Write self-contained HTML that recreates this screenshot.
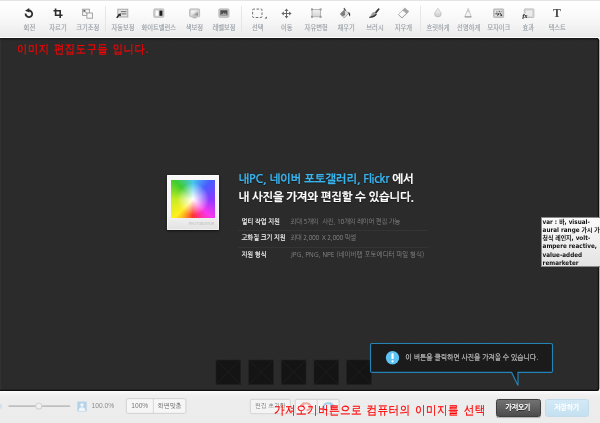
<!DOCTYPE html>
<html lang="ko">
<head>
<meta charset="utf-8">
<title>포토에디터</title>
<style>
html,body{margin:0;padding:0;}
body{width:600px;height:423px;overflow:hidden;position:relative;background:#ececec;font-family:"Liberation Sans","NanumGothic","Noto Sans CJK KR",sans-serif;}
.abs{position:absolute;}
#toolbar{position:absolute;left:0;top:0;width:600px;height:38px;background:linear-gradient(#ffffff 0,#fbfbfb 30%,#f5f5f5 60%,#eeeeee 85%,#e9e9e9 96%,#fdfdfd 97.5%,#fdfdfd 100%);border-top:1px solid #e4e4e4;box-sizing:border-box;}
.lb{position:absolute;width:60px;top:21.7px;text-align:center;font-family:"Noto Sans CJK KR","NanumGothic",sans-serif;font-size:6.3px;line-height:9px;color:#979ea5;-webkit-text-stroke:0.12px #979ea5;white-space:nowrap;transform:scaleY(1.1);}
.ticons{position:absolute;left:0;top:-1px;filter:blur(0.3px);}
.sep{position:absolute;top:5px;width:1px;height:25.5px;background:#e6e6e6;}
#canvas{position:absolute;left:0;top:38px;width:598.6px;height:352.6px;background-color:#2a2a2a;border-radius:0 2.5px 2.5px 0;overflow:hidden;}
#canvas .edge{position:absolute;left:0;top:0;width:100%;height:100%;border-radius:0 2.5px 2.5px 0;box-shadow:inset 0 1.5px 1px 0 rgba(0,0,0,.45), inset -1.2px 0 0.5px 0 rgba(0,0,0,.55), inset 0 -1.2px 0.6px 0 rgba(0,0,0,.65), inset 1px 0 0 0 rgba(255,255,255,.05);}
#canvas .pat{position:absolute;left:0;top:0;width:100%;height:100%;}
.red{position:absolute;color:#ff0000;font-family:"WenQuanYi Zen Hei","NanumGothic","Noto Sans CJK KR",sans-serif;white-space:nowrap;transform-origin:0 0;-webkit-text-stroke:0.2px #ff0000;}
#bottombar{position:absolute;left:0;top:390.6px;width:600px;height:33px;background:linear-gradient(#fcfcfc 0,#f7f7f7 1.5px,#f0f0f0 4px,#ededed 8px,#ececec 100%);}
</style>
</head>
<body>
<div id="root" style="position:absolute;left:0;top:0;width:600px;height:423px;will-change:transform;">
<div id="toolbar">
<svg class="ticons" width="600" height="38" viewBox="0 0 600 38">
<!-- rotate -->
<path d="M25.6 13.5 A3.3 3.3 0 1 0 28.9 10.5" fill="none" stroke="#2e2e2e" stroke-width="1.8"/>
<path d="M25 10.8 L29.2 8 L29.5 12.6 Z" fill="#2e2e2e"/>
<!-- crop -->
<path d="M55.6 8.5 V15.2 H62.6 M53.5 10.7 H60.2 V18" fill="none" stroke="#2e2e2e" stroke-width="1.6"/>
<!-- resize -->
<rect x="82.6" y="9.2" width="6.8" height="6.2" fill="#f4f4f4" stroke="#9a9a9a" stroke-width="0.9"/>
<rect x="86.9" y="13" width="5.5" height="5.2" fill="#fafafa" stroke="#9a9a9a" stroke-width="0.9"/>
<path d="M84 10.6 L87.2 13.6" stroke="#777" stroke-width="0.8"/><path d="M83.4 10 L85.8 10.3 L83.7 12.4 Z" fill="#555"/>
<!-- auto -->
<rect x="117.8" y="9.2" width="10" height="7.8" fill="#dcdcdc" stroke="#a5a5a5" stroke-width="0.9"/>
<rect x="119.4" y="10.6" width="7" height="5" fill="#ececec"/>
<path d="M120.8 11.7 H126.4 M121.5 13.9 H126.4" stroke="#555" stroke-width="0.9"/>
<path d="M116.7 17.9 L119.4 14.6" stroke="#222" stroke-width="1.5"/><path d="M120.6 12.9 L121 16.3 L117.8 14.7 Z" fill="#222"/>
<!-- white balance -->
<rect x="153.8" y="8.9" width="10" height="8.4" rx="1" fill="#cfcfcf" stroke="#b0b0b0" stroke-width="0.8"/>
<rect x="155.6" y="10.6" width="3.2" height="5.2" fill="#fdfdfd"/><rect x="158.8" y="10.6" width="0.9" height="5.2" fill="#999"/><rect x="159.6" y="10.6" width="2.8" height="5.2" fill="#1e1e1e"/>
<!-- color -->
<defs><linearGradient id="gcol" x1="0" y1="0" x2="1" y2="1"><stop offset="0" stop-color="#fff"/><stop offset="0.45" stop-color="#e8e8e8"/><stop offset="1" stop-color="#666"/></linearGradient>
<linearGradient id="gfree" x1="0" y1="0" x2="0" y2="1"><stop offset="0" stop-color="#f2f2f2"/><stop offset="1" stop-color="#d4d4d4"/></linearGradient>
<linearGradient id="gdrop" x1="0" y1="0" x2="0" y2="1"><stop offset="0" stop-color="#fafafa"/><stop offset="1" stop-color="#c9c9c9"/></linearGradient></defs>
<rect x="189.6" y="8.9" width="10" height="7.9" rx="1" fill="#d2d2d2" stroke="#b0b0b0" stroke-width="0.8"/>
<rect x="191.2" y="10.4" width="6.8" height="5" fill="url(#gcol)"/>
<rect x="192.6" y="17" width="4" height="1.3" fill="#b5b5b5"/>
<!-- level -->
<rect x="218.9" y="8.9" width="10" height="8.4" rx="1" fill="#cdcdcd" stroke="#ababab" stroke-width="0.8"/>
<rect x="220.3" y="10.2" width="7.2" height="5.2" fill="#505050"/>
<path d="M220.6 15.2 L221.8 13.6 L222.6 14.4 L223.6 12.6 L224.6 14 L225.4 13 L227.2 15.2 Z" fill="#a8a8a8"/>
<!-- select -->
<rect x="252.6" y="9.1" width="9.4" height="8.4" rx="1" fill="none" stroke="#707070" stroke-width="1" stroke-dasharray="2.6 1.5" stroke-dashoffset="1.2"/>
<path d="M266.8 16.4 V18.6 H264.6 Z" fill="#444"/>
<!-- move -->
<path d="M286.5 10.5 V16.5 M283.5 13.5 H289.5" stroke="#666" stroke-width="1" fill="none"/>
<path d="M286.5 8.4 L288.4 10.9 H284.6 Z M286.5 18.6 L288.4 16.1 H284.6 Z M281.4 13.5 L283.9 11.6 V15.4 Z M291.6 13.5 L289.1 11.6 V15.4 Z" fill="#666"/>
<!-- free transform -->
<rect x="312" y="9.4" width="8.6" height="7.4" fill="url(#gfree)" stroke="#a8a8a8" stroke-width="0.8"/>
<g fill="#999"><rect x="311" y="8.4" width="2" height="2"/><rect x="319.6" y="8.4" width="2" height="2"/><rect x="311" y="15.8" width="2" height="2"/><rect x="319.6" y="15.8" width="2" height="2"/></g>
<!-- bucket -->
<path d="M340.2 14 L344.6 9.4 L348.7 13.4 L344.2 18 Z" fill="#dedede" stroke="#8c8c8c" stroke-width="0.7"/>
<path d="M340.4 14 L344.6 9.7 L345.2 15 L342.6 16.3 Z" fill="#7c7c7c"/>
<path d="M343.9 8.2 L345.6 10.6" stroke="#555" stroke-width="1.3"/>
<path d="M348.4 11.8 C350.4 12.8 350.6 15.2 349.8 16.6 C349 15.4 348.5 14 348.4 11.8Z" fill="#2e2e2e"/>
<!-- brush -->
<path d="M378.6 9.2 L375.8 12.6" stroke="#333" stroke-width="1.8" stroke-linecap="round"/>
<path d="M374.6 12 L376.6 13.8 C376.4 15.2 375.4 16 374.2 16.4 C372.6 17 371 17.3 369.2 17.3 C371 16 371.2 14.2 372.4 12.8 C373 12.2 373.8 11.8 374.6 12Z" fill="#a2a2a2"/>
<path d="M369.2 17.4 C371.4 17.5 373.4 17.2 375 16.2 C375.8 15.6 376.3 14.8 376.5 14 L375.2 14.6 C374.6 15.4 372.6 16.4 369.2 17.4Z" fill="#2e2e2e" stroke="#2e2e2e" stroke-width="0.5"/>
<!-- eraser -->
<path d="M398.4 14.4 L404.8 8.2 L408.6 11.4 L402 17.8 Z" fill="#fbfbfb" stroke="#adadad" stroke-width="0.8" stroke-linejoin="round"/>
<path d="M402.7 10.2 L404.8 8.2 L408.6 11.4 L406.5 13.4 Z" fill="#a6a6a6" stroke="#a0a0a0" stroke-width="0.5" stroke-linejoin="round"/>
<path d="M398.6 14.8 L402 18 L408.6 11.7" fill="none" stroke="#a0a0a0" stroke-width="0.9" stroke-linejoin="round"/>
<!-- blur drop -->
<path d="M437.9 8.4 C439 10.6 441.2 12 441.2 13.9 A3.3 3 0 0 1 434.6 13.9 C434.6 12 436.8 10.6 437.9 8.4Z" fill="url(#gdrop)" stroke="#b6b6b6" stroke-width="0.7"/>
<!-- sharpen -->
<path d="M468.2 8.4 L471.3 16.9 H464.8 Z" fill="#f4f4f4" stroke="#b6b6b6" stroke-width="0.7" stroke-linejoin="round"/>
<path d="M464.8 16.9 H471.3" stroke="#909090" stroke-width="1"/>
<path d="M468.2 8.8 L469.4 12 H467Z" fill="#c9c9c9"/>
<!-- mosaic -->
<rect x="493.5" y="8.9" width="10.2" height="8.6" rx="0.8" fill="#c9c9c9" stroke="#b2b2b2" stroke-width="0.8"/>
<rect x="495" y="10.4" width="7.2" height="5.6" fill="#e6e6e6"/>
<g fill="#3a3a3a"><rect x="496.2" y="11.2" width="1.4" height="1.4" fill="#888"/><rect x="498.6" y="10.8" width="1.4" height="1.4" fill="#777"/><rect x="500.6" y="11" width="1.3" height="1.3" fill="#999"/><rect x="495.4" y="13" width="1.5" height="1.5" fill="#666"/><rect x="497.4" y="13.2" width="1.7" height="1.7"/><rect x="499.6" y="12.8" width="1.5" height="1.5" fill="#555"/><rect x="500.4" y="14.3" width="1.7" height="1.7"/><rect x="497" y="15" width="1.3" height="1" fill="#777"/></g>
<!-- effect -->
<rect x="524.3" y="8.9" width="9.6" height="8.6" rx="0.6" fill="#dcdcdc" stroke="#b4b4b4" stroke-width="0.8"/>
<rect x="525.6" y="10.2" width="7" height="6" fill="#ececec" stroke="#d0d0d0" stroke-width="0.5"/>
<rect x="522.6" y="13.4" width="4.6" height="5" fill="#f2f2f2" opacity="0.75"/>
<text x="522.6" y="18.2" font-family="Liberation Serif,serif" font-style="italic" font-weight="bold" font-size="5.8" fill="#1e1e1e" stroke="#1e1e1e" stroke-width="0.15">fx</text>
<!-- text -->
<text x="557" y="17" text-anchor="middle" font-family="Liberation Serif,serif" font-weight="bold" font-size="11.8" fill="#4a4a4a">T</text>
</svg>
<div class="lb" style="left:-0.6px">회전</div><div class="lb" style="left:28.0px">자르기</div><div class="lb" style="left:57.8px">크기조정</div><div class="lb" style="left:93.0px">자동보정</div><div class="lb" style="left:128.8px">화이트밸런스</div><div class="lb" style="left:164.4px">색보정</div><div class="lb" style="left:194.0px">레벨보정</div><div class="lb" style="left:227.8px">선택</div><div class="lb" style="left:256.7px">이동</div><div class="lb" style="left:286.2px">자유변형</div><div class="lb" style="left:316.1px">채우기</div><div class="lb" style="left:345.0px">브러시</div><div class="lb" style="left:373.4px">지우개</div><div class="lb" style="left:408.0px">흐릿하게</div><div class="lb" style="left:438.7px">선명하게</div><div class="lb" style="left:468.8px">모자이크</div><div class="lb" style="left:498.2px">효과</div><div class="lb" style="left:527.2px">텍스트</div>
<div class="sep" style="left:105.2px"></div><div class="sep" style="left:241px"></div><div class="sep" style="left:419.8px"></div>
</div>

<div class="abs" style="left:597px;top:40px;width:3px;height:349px;background:linear-gradient(to right,#777 0,#8c8c8c 55%,#c4c4c4 100%);"></div>
<div id="canvas">
  <svg class="pat" width="599" height="353"><defs><pattern id="chk" width="2.4" height="2.4" patternUnits="userSpaceOnUse"><rect width="2.4" height="2.4" fill="#272727"/><rect width="1.2" height="1.2" fill="#2f2f2f"/><rect x="1.2" y="1.2" width="1.2" height="1.2" fill="#2f2f2f"/></pattern></defs><rect width="599" height="353" fill="url(#chk)"/></svg>
  <div class="edge"></div>
</div>

<div class="red" style="left:17.2px;top:41.8px;font-size:12px;line-height:15px;letter-spacing:0.8px;word-spacing:0.5px;transform:scaleX(0.853);">이미지 편집도구들 입니다.</div>

<!-- polaroid -->
<div class="abs" style="left:167.2px;top:174.7px;width:51.5px;height:55.3px;background:linear-gradient(#f8f8f8 0,#f4f4f4 70%,#e2e2e2 100%);box-shadow:0 1px 2.5px rgba(0,0,0,.6), inset 0 0 0 0.6px #fff;border-radius:1px;"></div>
<div class="abs" style="left:171.2px;top:179.5px;width:43.9px;height:38px;background:radial-gradient(circle at 50% 50%,#fff 0,rgba(255,255,255,.85) 9%,rgba(255,255,255,0) 55%),conic-gradient(from 0deg,#45c8f0 0deg,#4a5cff 45deg,#8a3bff 90deg,#f838ee 135deg,#ff309a 158deg,#ff3030 180deg,#ff9a20 203deg,#fff020 225deg,#c4ec22 270deg,#40cc30 315deg,#45c8f0 360deg);"></div>
<div class="abs" style="left:187.2px;top:221.7px;width:27px;font-size:3.3px;line-height:5px;color:#c6c6c6;letter-spacing:0.12px;text-align:right;font-weight:bold;font-family:'Liberation Sans',sans-serif;">PHOTOEDITOR</div>

<!-- heading -->
<div class="abs" style="left:238.5px;top:169.2px;font-family:'NanumGothic','Noto Sans CJK KR',sans-serif;font-weight:bold;font-size:11.4px;line-height:20px;color:#3ab4ee;white-space:nowrap;letter-spacing:-0.14px;-webkit-text-stroke:0.15px #3ab4ee;text-shadow:0 1px 1px rgba(0,0,0,.45);">내PC, 네이버 포토갤러리, Flickr <span style="color:#fff;-webkit-text-stroke:0.15px #fff;">에서</span></div>
<div class="abs" style="left:238.5px;top:186.7px;font-family:'NanumGothic','Noto Sans CJK KR',sans-serif;font-weight:bold;font-size:11.4px;line-height:20px;color:#fff;white-space:nowrap;letter-spacing:-0.23px;-webkit-text-stroke:0.15px #fff;text-shadow:0 1px 1px rgba(0,0,0,.45);">내 사진을 가져와 편집할 수 있습니다.</div>

<!-- table -->
<div class="abs" style="left:238px;top:229.6px;width:190px;height:1px;background:#343434;"></div>
<div class="abs" style="left:238px;top:246.6px;width:190px;height:1px;background:#343434;"></div>
<div class="abs trh" style="left:241.5px;top:216.5px;">멀티 작업 지원</div>
<div class="abs trh" style="left:241.5px;top:233px;">고화질 크기 지원</div>
<div class="abs trh" style="left:241.5px;top:249.5px;">지원 형식</div>
<div class="abs trv" style="left:290.5px;top:216.5px;letter-spacing:-0.12px;">최대 5개의<span style="display:inline-block;width:3.6px"></span>사진, 10개의 레이어 편집 가능</div>
<div class="abs trv" style="left:290.5px;top:233px;letter-spacing:-0.2px;">최대 2,000<span style="display:inline-block;width:2.6px"></span>X 2,000 픽셀</div>
<div class="abs trv" style="left:290.5px;top:249.5px;font-size:6.4px;">JPG, PNG, NPE (네이버랩 포토에디터 파일 형식)</div>
<style>
.trh{font-family:'NanumGothic','Noto Sans CJK KR',sans-serif;font-weight:bold;font-size:6.2px;line-height:10px;color:#f4f4f4;white-space:nowrap;transform:scaleY(1.13);}
.trv{font-family:'NanumGothic','Noto Sans CJK KR',sans-serif;font-size:6.2px;line-height:10px;color:#8a8a8a;white-space:nowrap;transform:scaleY(1.13);}
</style>

<!-- side tooltip -->
<div class="abs" style="left:541px;top:216.5px;width:62px;height:50px;background:linear-gradient(#fbfbfb,#e3e3e3);border:1px solid #8a8a8a;box-sizing:border-box;overflow:hidden;">
  <div style="position:absolute;left:0.6px;top:0.3px;width:70px;font-family:'DejaVu Sans Condensed','DejaVu Sans','Noto Sans CJK KR',sans-serif;font-weight:bold;font-size:6.3px;line-height:8.2px;color:#111;white-space:nowrap;">var : <span class="k">바</span>, visual-<br>aural range <span class="k">가시 가</span><br><span class="k">청식 레인지</span>, volt-<br>ampere reactive,<br>value-added<br>remarketer</div>
</div>

<!-- thumbs -->
<svg class="abs" style="left:0;top:0;" width="600" height="423">
  <g fill="#141414" stroke="#202020" stroke-width="0.6">
    <rect x="216" y="360" width="24.7" height="24.5"/>
    <rect x="248.7" y="360" width="24.7" height="24.5"/>
    <rect x="281.3" y="360" width="24.7" height="24.5"/>
    <rect x="314" y="360" width="24.7" height="24.5"/>
    <rect x="346.7" y="360" width="24.7" height="24.5"/>
  </g>
  <g stroke="#212121" stroke-width="0.7">
    <path d="M216 360 l24.7 24.5 M240.7 360 l-24.7 24.5 M248.7 360 l24.7 24.5 M273.4 360 l-24.7 24.5 M281.3 360 l24.7 24.5 M306 360 l-24.7 24.5 M314 360 l24.7 24.5 M338.7 360 l-24.7 24.5 M346.7 360 l24.7 24.5 M371.4 360 l-24.7 24.5"/>
  </g>
  <!-- balloon -->
  <path d="M372 343.5 H551 Q552.5 343.5 552.5 345 V370.9 Q552.5 372.4 551 372.4 H518 V385.6 L511.6 372.4 H372 Q370.5 372.4 370.5 370.9 V345 Q370.5 343.5 372 343.5 Z" fill="#1b1b1b" stroke="#2584b6" stroke-width="1.15"/>
  <circle cx="392.5" cy="357.7" r="6.7" fill="#5cc3f4"/>
  <rect x="391.45" y="353.3" width="2.2" height="5.8" rx="0.7" fill="#fff"/>
  <circle cx="392.55" cy="361.3" r="1.15" fill="#fff"/>
</svg>
<div class="abs" style="left:405.5px;top:352.5px;font-family:'NanumGothic','Noto Sans CJK KR',sans-serif;font-size:6.7px;line-height:10px;color:#c8c8c8;white-space:nowrap;transform:scaleY(1.12);-webkit-text-stroke:0.15px #c8c8c8;">이 버튼을 클릭하면 사진을 가져올 수 있습니다.</div>

<!-- bottom bar -->
<div id="bottombar"></div>
<svg class="abs" style="left:0;top:0;" width="600" height="423">
  <rect x="0" y="404" width="2" height="4.6" fill="#cfe2ee"/>
  <rect x="8.3" y="405.2" width="62" height="1.7" rx="0.85" fill="#c0c0c0"/>
  <circle cx="38.8" cy="406.5" r="3.3" fill="#d9d9d9"/><circle cx="38.8" cy="406" r="3" fill="#f1f1f1" stroke="#c6c6c6" stroke-width="0.7"/>
  <rect x="77.3" y="401.6" width="9.4" height="10" rx="0.8" fill="#b5d3e8"/>
  <circle cx="82" cy="405" r="1.7" fill="#eef6fb"/>
  <path d="M78.6 411 C78.8 408 80 407.2 82 407.2 C84 407.2 85.2 408 85.4 411 Z" fill="#eef6fb"/>
  <!-- 100% / fit group -->
  <rect x="126.3" y="398.6" width="59.6" height="14.8" rx="1.5" fill="#f6f6f6" stroke="#c9c9c9" stroke-width="0.8"/>
  <path d="M153.4 398.6 V413.4" stroke="#cfcfcf" stroke-width="0.8"/>
  <!-- reset -->
  <rect x="250.3" y="399.3" width="40" height="14.4" rx="1.5" fill="#f4f4f4" stroke="#cdcdcd" stroke-width="0.8"/>
  <!-- undo redo -->
  <rect x="295.2" y="399.3" width="44" height="14.4" rx="1.5" fill="#f4f4f4" stroke="#cdcdcd" stroke-width="0.8"/>
  <path d="M317.2 399.3 V413.7" stroke="#d4d4d4" stroke-width="0.8"/>
  <path d="M302.5 404.3 Q306.5 402.2 309.6 404.4 Q312 407 309.4 409.2 Q308 410.2 306.4 410.2" fill="none" stroke="#eda9a2" stroke-width="2"/>
  <path d="M299.6 405.4 L304 401.8 V407.4 Z" fill="#eda9a2"/>
  <path d="M331.8 404.3 Q327.8 402.2 324.7 404.4 Q322.3 407 324.9 409.2 Q326.3 410.2 327.9 410.2" fill="none" stroke="#a3cfec" stroke-width="2"/>
  <path d="M334.7 405.4 L330.3 401.8 V407.4 Z" fill="#a3cfec"/>
</svg>
<div class="abs bt" style="left:91.5px;top:401px;font-family:'Liberation Sans',sans-serif;font-size:6.7px;color:#8c8c8c;">100.0%</div>
<div class="abs bt" style="left:126.3px;top:401px;width:27px;text-align:center;font-family:'Liberation Sans',sans-serif;font-size:6.6px;color:#777;">100%</div>
<div class="abs bt" style="left:153.4px;top:401px;width:32.5px;text-align:center;font-size:6.3px;color:#666;">화면맞춤</div>
<div class="abs bt" style="left:250.3px;top:401.4px;width:40px;text-align:center;font-size:6.2px;color:#777;">편집 초기화</div>
<style>
.k{font-size:5.9px;}
.bt{font-family:'NanumGothic','Noto Sans CJK KR',sans-serif;line-height:10px;white-space:nowrap;}
</style>

<!-- main buttons -->
<div class="abs" style="left:495.6px;top:398.5px;width:45px;height:18.2px;box-sizing:border-box;border:1px solid #3e3e3e;border-radius:2.5px;background:linear-gradient(#727272,#4c4c4c);box-shadow:0 0.6px 0.8px rgba(0,0,0,.25);text-align:center;font-family:'NanumGothic','Noto Sans CJK KR',sans-serif;font-weight:bold;font-size:6.7px;line-height:16.4px;color:#fff;-webkit-text-stroke:0.15px #fff;text-shadow:0 0.5px 0.5px rgba(0,0,0,.6);"><span style="display:inline-block;transform:scaleY(1.15);">가져오기</span></div>
<div class="abs" style="left:544.5px;top:398.5px;width:44.6px;height:18.2px;box-sizing:border-box;border:1px solid #c3dcea;border-radius:2.5px;background:linear-gradient(#d3e9f6,#c4e0f0);text-align:center;font-family:'NanumGothic','Noto Sans CJK KR',sans-serif;font-weight:bold;font-size:6.7px;line-height:16.4px;color:#fff;-webkit-text-stroke:0.15px #fff;"><span style="display:inline-block;transform:scaleY(1.15);">저장하기</span></div>

<div class="red" style="left:274.4px;top:402.8px;font-size:12px;line-height:15px;letter-spacing:0.47px;word-spacing:1.1px;transform:scaleX(0.882);">가져오기버튼으로 컴퓨터의 이미지를 선택</div>

</div>
</body>
</html>
